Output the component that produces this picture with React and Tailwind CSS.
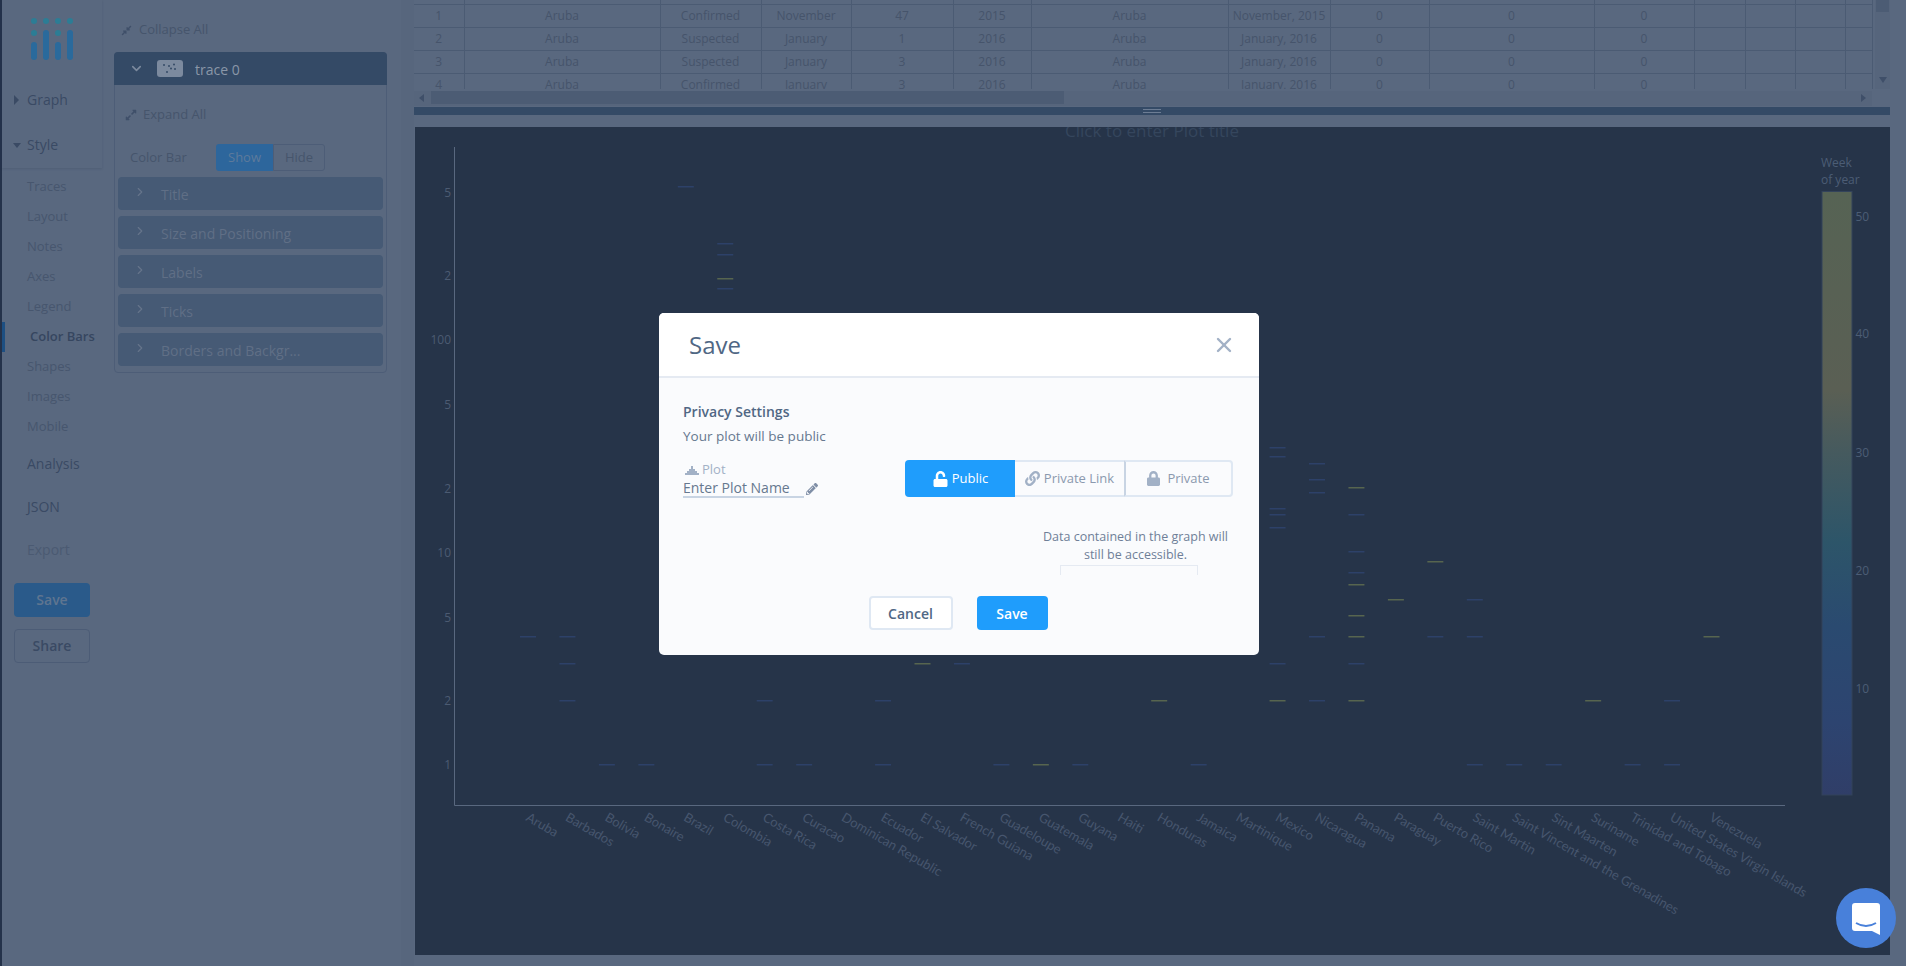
import React from 'react';
import { ChevronDown, ChevronRight, X } from 'lucide-react';
import { FaCompressAlt, FaExpandAlt, FaUnlock, FaLink, FaLock, FaPencilAlt } from 'react-icons/fa';

const STYLE_ITEMS = ['Traces', 'Layout', 'Notes', 'Axes', 'Legend', 'Color Bars', 'Shapes', 'Images', 'Mobile'];
const FOLDS = ['Title', 'Size and Positioning', 'Labels', 'Ticks', 'Borders and Backgr...'];

const COLS = [
  'w-[50px]', 'w-[196px]', 'w-[101px]', 'w-[90px]', 'w-[102px]', 'w-[78px]', 'w-[197px]', 'w-[102px]',
  'w-[99px]', 'w-[165px]', 'w-[100px]', 'w-[51px]', 'w-[50px]', 'w-[50px]', 'w-[27px]',
];

const ROWS = [
  ['', '', '', '', '', '', '', '', '', '', '', '', '', '', ''],
  ['1', 'Aruba', 'Confirmed', 'November', '47', '2015', 'Aruba', 'November, 2015', '0', '0', '0', '', '', '', ''],
  ['2', 'Aruba', 'Suspected', 'January', '1', '2016', 'Aruba', 'January, 2016', '0', '0', '0', '', '', '', ''],
  ['3', 'Aruba', 'Suspected', 'January', '3', '2016', 'Aruba', 'January, 2016', '0', '0', '0', '', '', '', ''],
  ['4', 'Aruba', 'Confirmed', 'January', '3', '2016', 'Aruba', 'January, 2016', '0', '0', '0', '', '', '', ''],
];

const COUNTRIES = [
  'Aruba', 'Barbados', 'Bolivia', 'Bonaire', 'Brazil', 'Colombia', 'Costa Rica', 'Curacao', 'Dominican Republic',
  'Ecuador', 'El Salvador', 'French Guiana', 'Guadeloupe', 'Guatemala', 'Guyana', 'Haiti', 'Honduras', 'Jamaica',
  'Martinique', 'Mexico', 'Nicaragua', 'Panama', 'Paraguay', 'Puerto Rico', 'Saint Martin',
  'Saint Vincent and the Grenadines', 'Sint Maarten', 'Suriname', 'Trinidad and Tobago',
  'United States Virgin Islands', 'Venezuela',
];

// [country index, y, olive?]
const MARKS = [
  [0, 637], [1, 637], [1, 664], [1, 701], [2, 765], [3, 765], [4, 187], [5, 244], [5, 255], [5, 279, 1], [5, 289],
  [6, 701], [6, 765], [7, 765], [9, 701], [9, 765], [10, 664, 1], [11, 664], [12, 765], [13, 765, 1], [14, 765],
  [16, 701, 1], [17, 765], [19, 448], [19, 457], [19, 509], [19, 515], [19, 528], [19, 664], [19, 701, 1],
  [20, 464], [20, 480], [20, 493], [20, 637], [20, 701], [21, 488, 1], [21, 515], [21, 552], [21, 573], [21, 585, 1],
  [21, 616, 1], [21, 637, 1], [21, 664], [21, 701, 1], [22, 600, 1], [23, 562, 1], [23, 637], [24, 600], [24, 637],
  [24, 765], [25, 765], [26, 765], [27, 701, 1], [28, 765], [29, 701], [29, 765], [30, 637, 1],
];

const Y_TICKS = [['5', 193], ['2', 276], ['100', 340], ['5', 405], ['2', 489], ['10', 553], ['5', 618], ['2', 701], ['1', 765]];
const BAR_TICKS = [['50', 217], ['40', 334], ['30', 453], ['20', 571], ['10', 689]];

const xOf = (i) => 528 + i * 39.45;

const Caret = ({ open }) => (
  <svg width="8" height="10" viewBox="0 0 8 10" className="absolute left-[11px]">
    <path d={open ? 'M0 3h8L4 8z' : 'M1 0l5 5-5 5z'} fill="#3a4a64" />
  </svg>
);

const Sidebar = () => (
  <div className="w-[102px] h-full shrink-0 border-l-2 border-[#24324a] flex flex-col">
    <div className="h-[168px] bg-[#59687f] shadow-[0_1px_2px_rgba(40,55,80,0.2)]">
      <div className="h-[77px] pl-[29px] pt-[18px]">
        <svg width="42" height="42" viewBox="0 0 42 42">
          {[3, 15, 27, 39].map((x) => <circle key={x} cx={x} cy="3" r="3" fill="#2c7d95" />)}
          {[3, 27].map((x) => <circle key={x} cx={x} cy="15" r="3" fill="#2c7d95" />)}
          <rect x="0" y="24" width="6" height="18" rx="3" fill="#2a6a9c" />
          <rect x="12" y="12" width="6" height="30" rx="3" fill="#2a6a9c" />
          <rect x="24" y="24" width="6" height="18" rx="3" fill="#2a6a9c" />
          <rect x="36" y="12" width="6" height="30" rx="3" fill="#2a6a9c" />
        </svg>
      </div>
      <div className="relative h-[45px] pl-[25px] flex items-center text-[14px] text-[#3a4a64]"><Caret />Graph</div>
      <div className="relative h-[45px] pl-[25px] flex items-center text-[14px] text-[#3a4a64]"><Caret open />Style</div>
    </div>
    <div className="h-[274px] pt-[4px]">
      {STYLE_ITEMS.map((item) => (
        item === 'Color Bars' ? (
          <div key={item} className="h-[30px] pl-[25px] border-l-[3px] border-[#1d4f82] flex items-center text-[13px] font-semibold text-[#36465f]">{item}</div>
        ) : (
          <div key={item} className="h-[30px] pl-[25px] flex items-center text-[13px] text-[#47566e]">{item}</div>
        )
      ))}
    </div>
    <div className="flex-1 bg-[#59687f]">
      <div className="h-[43px] pl-[25px] flex items-center text-[14px] text-[#3a4a64]">Analysis</div>
      <div className="h-[43px] pl-[25px] flex items-center text-[14px] text-[#3a4a64]">JSON</div>
      <div className="h-[43px] pl-[25px] flex items-center text-[14px] text-[#4b5a72]">Export</div>
      <div className="mt-[12px] ml-[12px] w-[76px] h-[34px] pb-[2px] rounded-[4px] bg-[#2a5a8a] flex items-center justify-center text-[14px] font-semibold text-[#5f7590]">Save</div>
      <div className="mt-[12px] ml-[12px] w-[76px] h-[34px] pb-[2px] rounded-[4px] border border-[#4c5c76] flex items-center justify-center text-[14px] font-semibold text-[#3a4a64]">Share</div>
    </div>
  </div>
);

const Panel = () => (
  <div className="w-[299px] shrink-0 pl-[12px]">
    <div className="mt-[21px] h-[18px] ml-[7px] flex items-center gap-[7px] text-[13px] text-[#46556c]">
      <FaCompressAlt className="w-[11px] h-[11px] text-[#3f4f69]" />
      Collapse All
    </div>
    <div className="mt-[13px] w-[273px] h-[321px] rounded-[4px] border border-[#4d5d77]">
      <div className="-mx-px -mt-px h-[33px] rounded-t-[4px] bg-[#344a66] flex items-center pl-[15px]">
        <ChevronDown size={15} strokeWidth={2.5} className="text-[#7c8a9e]" />
        <div className="ml-[13px] w-[26px] h-[17px] rounded-[3px] bg-[#7c8a9e] flex items-center justify-center">
          <svg width="16" height="11" viewBox="0 0 16 11" fill="#344a66">
            <circle cx="2" cy="2" r="1" /><circle cx="7" cy="3" r="1" /><circle cx="12" cy="1.5" r="1" />
            <circle cx="9" cy="5.5" r="1" /><circle cx="5" cy="9" r="1" /><circle cx="13" cy="6" r="1" />
          </svg>
        </div>
        <span className="ml-[12px] mt-[2px] text-[14px] text-[#8a97a8]">trace 0</span>
      </div>
      <div className="mt-[21px] h-[18px] ml-[10px] flex items-center gap-[6px] text-[13px] text-[#46556c]">
        <FaExpandAlt className="w-[12px] h-[12px] text-[#3f4f69]" />
        Expand All
      </div>
      <div className="mt-[20px] h-[27px] flex items-center pl-[15px]">
        <span className="w-[86px] text-[13px] text-[#46556c]">Color Bar</span>
        <div className="flex h-[27px] text-[13px]">
          <div className="w-[57px] rounded-l-[3px] bg-[#2d669c] text-[#5d7a9b] flex items-center justify-center">Show</div>
          <div className="w-[52px] rounded-r-[3px] border border-[#4d5d77] text-[#46556c] flex items-center justify-center">Hide</div>
        </div>
      </div>
      <div className="mt-[6px] mx-[3px] flex flex-col gap-[6px]">
        {FOLDS.map((fold) => (
          <div key={fold} className="h-[33px] rounded-[4px] bg-[#465a75] flex items-center pl-[15px] text-[14px] text-[#606f86]">
            <ChevronRight size={14} strokeWidth={2} className="text-[#65748a] -mt-[3px]" />
            <span className="ml-[14px] mt-[2px]">{fold}</span>
          </div>
        ))}
      </div>
    </div>
  </div>
);

const DataGrid = () => (
  <div className="flex h-[89px] overflow-hidden">
    <table className="table-fixed border-collapse w-[1458px] h-[89px] text-[12px] text-[#46546b]">
      <tbody>
        {ROWS.map((row, r) => (
          <tr key={r} className={r === 0 ? 'h-[4px]' : 'h-[23px]'}>
            {row.map((cell, c) => (
              <td key={c} className={`${COLS[c]} p-0 text-center leading-none border border-[#4b5b73] border-t-0 first:border-l-0`}>{cell}</td>
            ))}
          </tr>
        ))}
      </tbody>
    </table>
    <div className="relative w-[16px] ml-[2px] bg-[#56657c]">
      <div className="mx-[1px] h-[12px] bg-[#4c5c74]" />
      <svg width="8" height="6" viewBox="0 0 8 6" className="absolute left-[4px] top-[77px]"><path d="M0 0h8L4 6z" fill="#3f4f69" /></svg>
    </div>
  </div>
);

const HScroll = () => (
  <div className="relative h-[15px] mt-[2px] w-[1458px] bg-[#56657c]">
    <svg width="5" height="8" viewBox="0 0 5 8" className="absolute left-[5px] top-[3px]"><path d="M5 0v8L0 4z" fill="#3f4f69" /></svg>
    <div className="absolute left-[17px] top-0 w-[633px] h-[13px] bg-[#4c5c74]" />
    <svg width="5" height="8" viewBox="0 0 5 8" className="absolute right-[6px] top-[3px]"><path d="M0 0v8l5-4z" fill="#3f4f69" /></svg>
  </div>
);

const ResizeBar = () => (
  <div className="h-[8px] mt-[1px] bg-[#344a66] flex flex-col items-center justify-center gap-[2px]">
    <div className="w-[18px] h-px bg-[#6d7d94]" />
    <div className="w-[18px] h-px bg-[#6d7d94]" />
  </div>
);

const Plot = () => (
  <div className="mt-[12px] ml-px h-[828px] bg-[#263449]">
    <svg width="1474" height="828" viewBox="415 127 1474 828" className="block font-['Open_Sans',sans-serif]">
      <defs>
        <linearGradient id="colorbar" x1="0" y1="0" x2="0" y2="1">
          <stop offset="0" stopColor="#566354" />
          <stop offset="0.33" stopColor="#5a5f54" />
          <stop offset="0.43" stopColor="#465a5e" />
          <stop offset="0.58" stopColor="#2d5569" />
          <stop offset="0.72" stopColor="#2a4a70" />
          <stop offset="0.88" stopColor="#2d4470" />
          <stop offset="1" stopColor="#303e68" />
        </linearGradient>
      </defs>
      <text x="1152" y="137" textAnchor="middle" fontSize="17" fill="#35465d">Click to enter Plot title</text>
      <path d="M454.5 147V805.5H1785" fill="none" stroke="#59687f" />
      {Y_TICKS.map(([label, y], i) => (
        <text key={i} x="451" y={y + 4} textAnchor="end" fontSize="12" fill="#4c5b72">{label}</text>
      ))}
      {MARKS.map(([i, y, olive], n) => (
        <rect key={n} x={xOf(i) - 8} y={y - 1} width="16" height="1.5" fill={olive ? '#57654f' : '#2d4169'} />
      ))}
      {COUNTRIES.map((name, i) => (
        <text key={name} x={xOf(i) - 3} y="820" fontSize="13" fontFamily="Lato, sans-serif" fill="#47566e" transform={`rotate(30 ${xOf(i) - 3} 820)`}>{name}</text>
      ))}
      <text x="1821" y="167" fontSize="12" fill="#4c5d75">Week</text>
      <text x="1821" y="184" fontSize="12" fill="#4c5d75">of year</text>
      <rect x="1822" y="191.5" width="30" height="603.5" fill="url(#colorbar)" stroke="#33435b" />
      {BAR_TICKS.map(([label, y]) => (
        <text key={label} x="1855.5" y={y + 4} fontSize="12" fill="#4c5d75">{label}</text>
      ))}
    </svg>
  </div>
);

const SaveModal = () => (
  <div className="absolute left-[659px] top-[313px] w-[600px] h-[342px] rounded-[5px] overflow-hidden bg-[#fafbfd] flex flex-col">
    <div className="h-[65px] shrink-0 bg-white border-b-2 border-[#e5eaf2] flex items-center justify-between pl-[30px] pr-[23px]">
      <span className="text-[24px] text-[#506784]">Save</span>
      <X size={24} strokeWidth={2.4} className="text-[#a2b1c6]" />
    </div>
    <div className="flex-1 pl-[24px] pr-[26px] pt-[24px] flex flex-col">
      <div className="text-[14px] leading-[20px] font-semibold text-[#506784]">Privacy Settings</div>
      <div className="mt-[4px] text-[13.5px] leading-[20px] text-[#66788f]">Your plot will be public</div>
      <div className="mt-[14px] flex justify-between">
        <div>
          <div className="h-[20px] flex items-center gap-[3px] text-[13px] text-[#a2b1c6] pl-[2px]">
            <svg width="14" height="9" viewBox="0 0 14 9" fill="#a2b1c6"><path d="M0 9V7h2V5h2V3h2V0h2v3h2v2h2v2h2v2z" /></svg>
            Plot
          </div>
          <div className="flex items-end gap-[2px]">
            <div className="w-[121px] h-[18px] border-b-2 border-[#c8d4e3] text-[14px] leading-[15px] text-[#66788f] whitespace-nowrap">Enter Plot Name</div>
            <FaPencilAlt className="mb-[3px] w-[12px] h-[12px] text-[#7f8ea6]" />
          </div>
        </div>
        <div className="flex h-[37px] w-[328px] text-[13px] text-[#8b99ae]">
          <div className="w-[110px] rounded-l-[4px] bg-[#1f9dfc] text-white flex items-center justify-center gap-[3px]">
            <FaUnlock className="w-[17px] h-[16px]" />Public
          </div>
          <div className="w-[109px] border-y-2 border-[#dfe8f3] flex items-center justify-center gap-[4px]">
            <FaLink className="w-[15px] h-[15px] text-[#a2b1c6]" />Private Link
          </div>
          <div className="w-[109px] rounded-r-[4px] border-2 border-[#dfe8f3] border-l-[#c8d4e3] flex items-center justify-center gap-[7px]">
            <FaLock className="w-[13px] h-[15px] text-[#a2b1c6]" />Private
          </div>
        </div>
      </div>
      <div className="mt-[30px] self-end w-[195px] flex flex-col items-center">
        <div className="text-center text-[12.5px] leading-[18px] text-[#6f7f98]">Data contained in the graph will still be accessible.</div>
        <div className="mt-[1px] mr-[13px] w-[138px] h-[10px] border border-b-0 border-[#e5eaf2]" />
      </div>
      <div className="mt-[21px] flex justify-center gap-[24px] text-[14px] font-semibold">
        <div className="w-[84px] h-[34px] rounded-[4px] bg-white border-2 border-[#dfe8f3] text-[#506784] flex items-center justify-center">Cancel</div>
        <div className="w-[71px] h-[34px] rounded-[4px] bg-[#1f9dfc] text-white flex items-center justify-center">Save</div>
      </div>
    </div>
  </div>
);

const ChatBubble = () => (
  <div className="absolute left-[1836px] top-[888px] w-[60px] h-[60px] rounded-full bg-[#4880da]">
    <svg width="60" height="60" viewBox="0 0 60 60">
      <path d="M19 15H41a3 3 0 0 1 3 3V47l-8-4H19a3 3 0 0 1-3-3V18a3 3 0 0 1 3-3z" fill="#fff" />
      <path d="M20 35Q30 41 40 35" fill="none" stroke="#4880da" strokeWidth="2" />
    </svg>
  </div>
);

const App = () => (
  <div className="relative w-[1906px] h-[966px] overflow-hidden flex bg-[#59687f] font-['Open_Sans',sans-serif]">
    <Sidebar />
    <Panel />
    <div className="w-[13px] shrink-0 bg-[#57667d]" />
    <div className="flex-1 min-w-0 pr-[16px]">
      <DataGrid />
      <HScroll />
      <ResizeBar />
      <Plot />
    </div>
    <SaveModal />
    <ChatBubble />
  </div>
);

export default App;
